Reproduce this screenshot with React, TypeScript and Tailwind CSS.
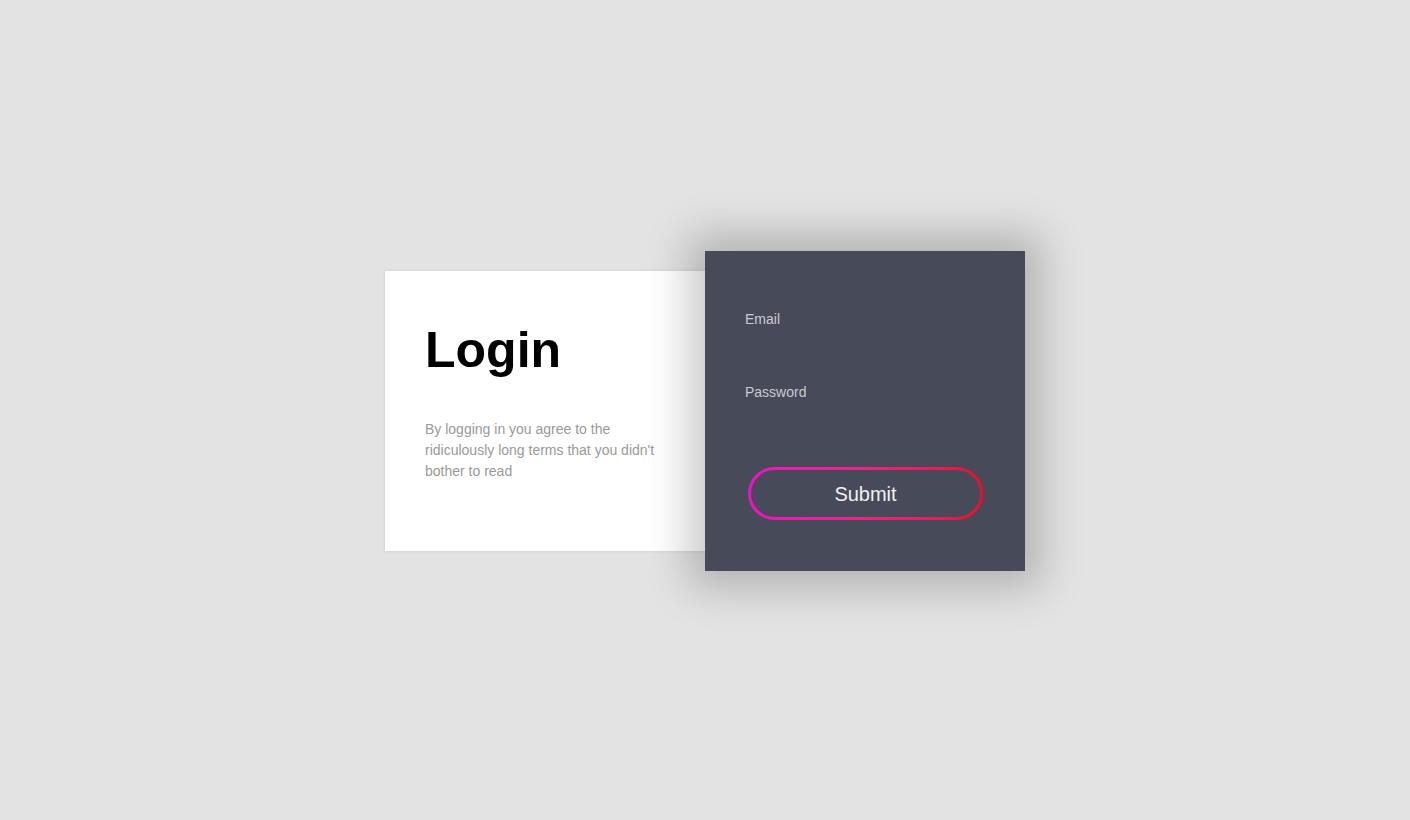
export default function App() {
  return (
    <div
      className="flex h-screen w-full items-center justify-center bg-[#e3e3e4]"
      style={{ fontFamily: '"Liberation Sans", Arial, sans-serif' }}
    >
      <div className="mt-[2px] flex items-center">
        {/* Info panel */}
        <div className="h-[280px] w-[320px] bg-white px-10 pt-[49px] shadow-[0_0_3px_rgba(0,0,0,0.12)]">
          <h1 className="text-[50px] font-bold leading-[60px] text-black">Login</h1>
          <p className="mt-[39px] text-sm leading-[21px] text-[#999]">
            By logging in you agree to the ridiculously long terms that you didn't bother to read
          </p>
        </div>

        {/* Form panel */}
        <form className="relative z-10 flex h-[320px] w-[320px] flex-col bg-[#474a59] px-10 pt-[58px] shadow-[0_0_40px_16px_rgba(0,0,0,0.22)]">
          <label className="block text-sm leading-5 text-[#c9cad2]">Email</label>
          <input type="email" className="h-[53px] w-full bg-transparent text-sm text-white outline-none" />
          <label className="block text-sm leading-5 text-[#c9cad2]">Password</label>
          <input type="password" className="h-[44px] w-full bg-transparent text-sm text-white outline-none" />
          <button
            type="button"
            className="ml-[3px] mt-[21px] h-[53px] w-[235px] rounded-full bg-gradient-to-r from-[#f00ecb] to-[#e80f2c] p-[3px]"
          >
            <span className="flex h-full w-full items-center justify-center rounded-full bg-[#474a59] text-xl text-[#f0f0f4]">
              Submit
            </span>
          </button>
        </form>
      </div>
    </div>
  );
}
